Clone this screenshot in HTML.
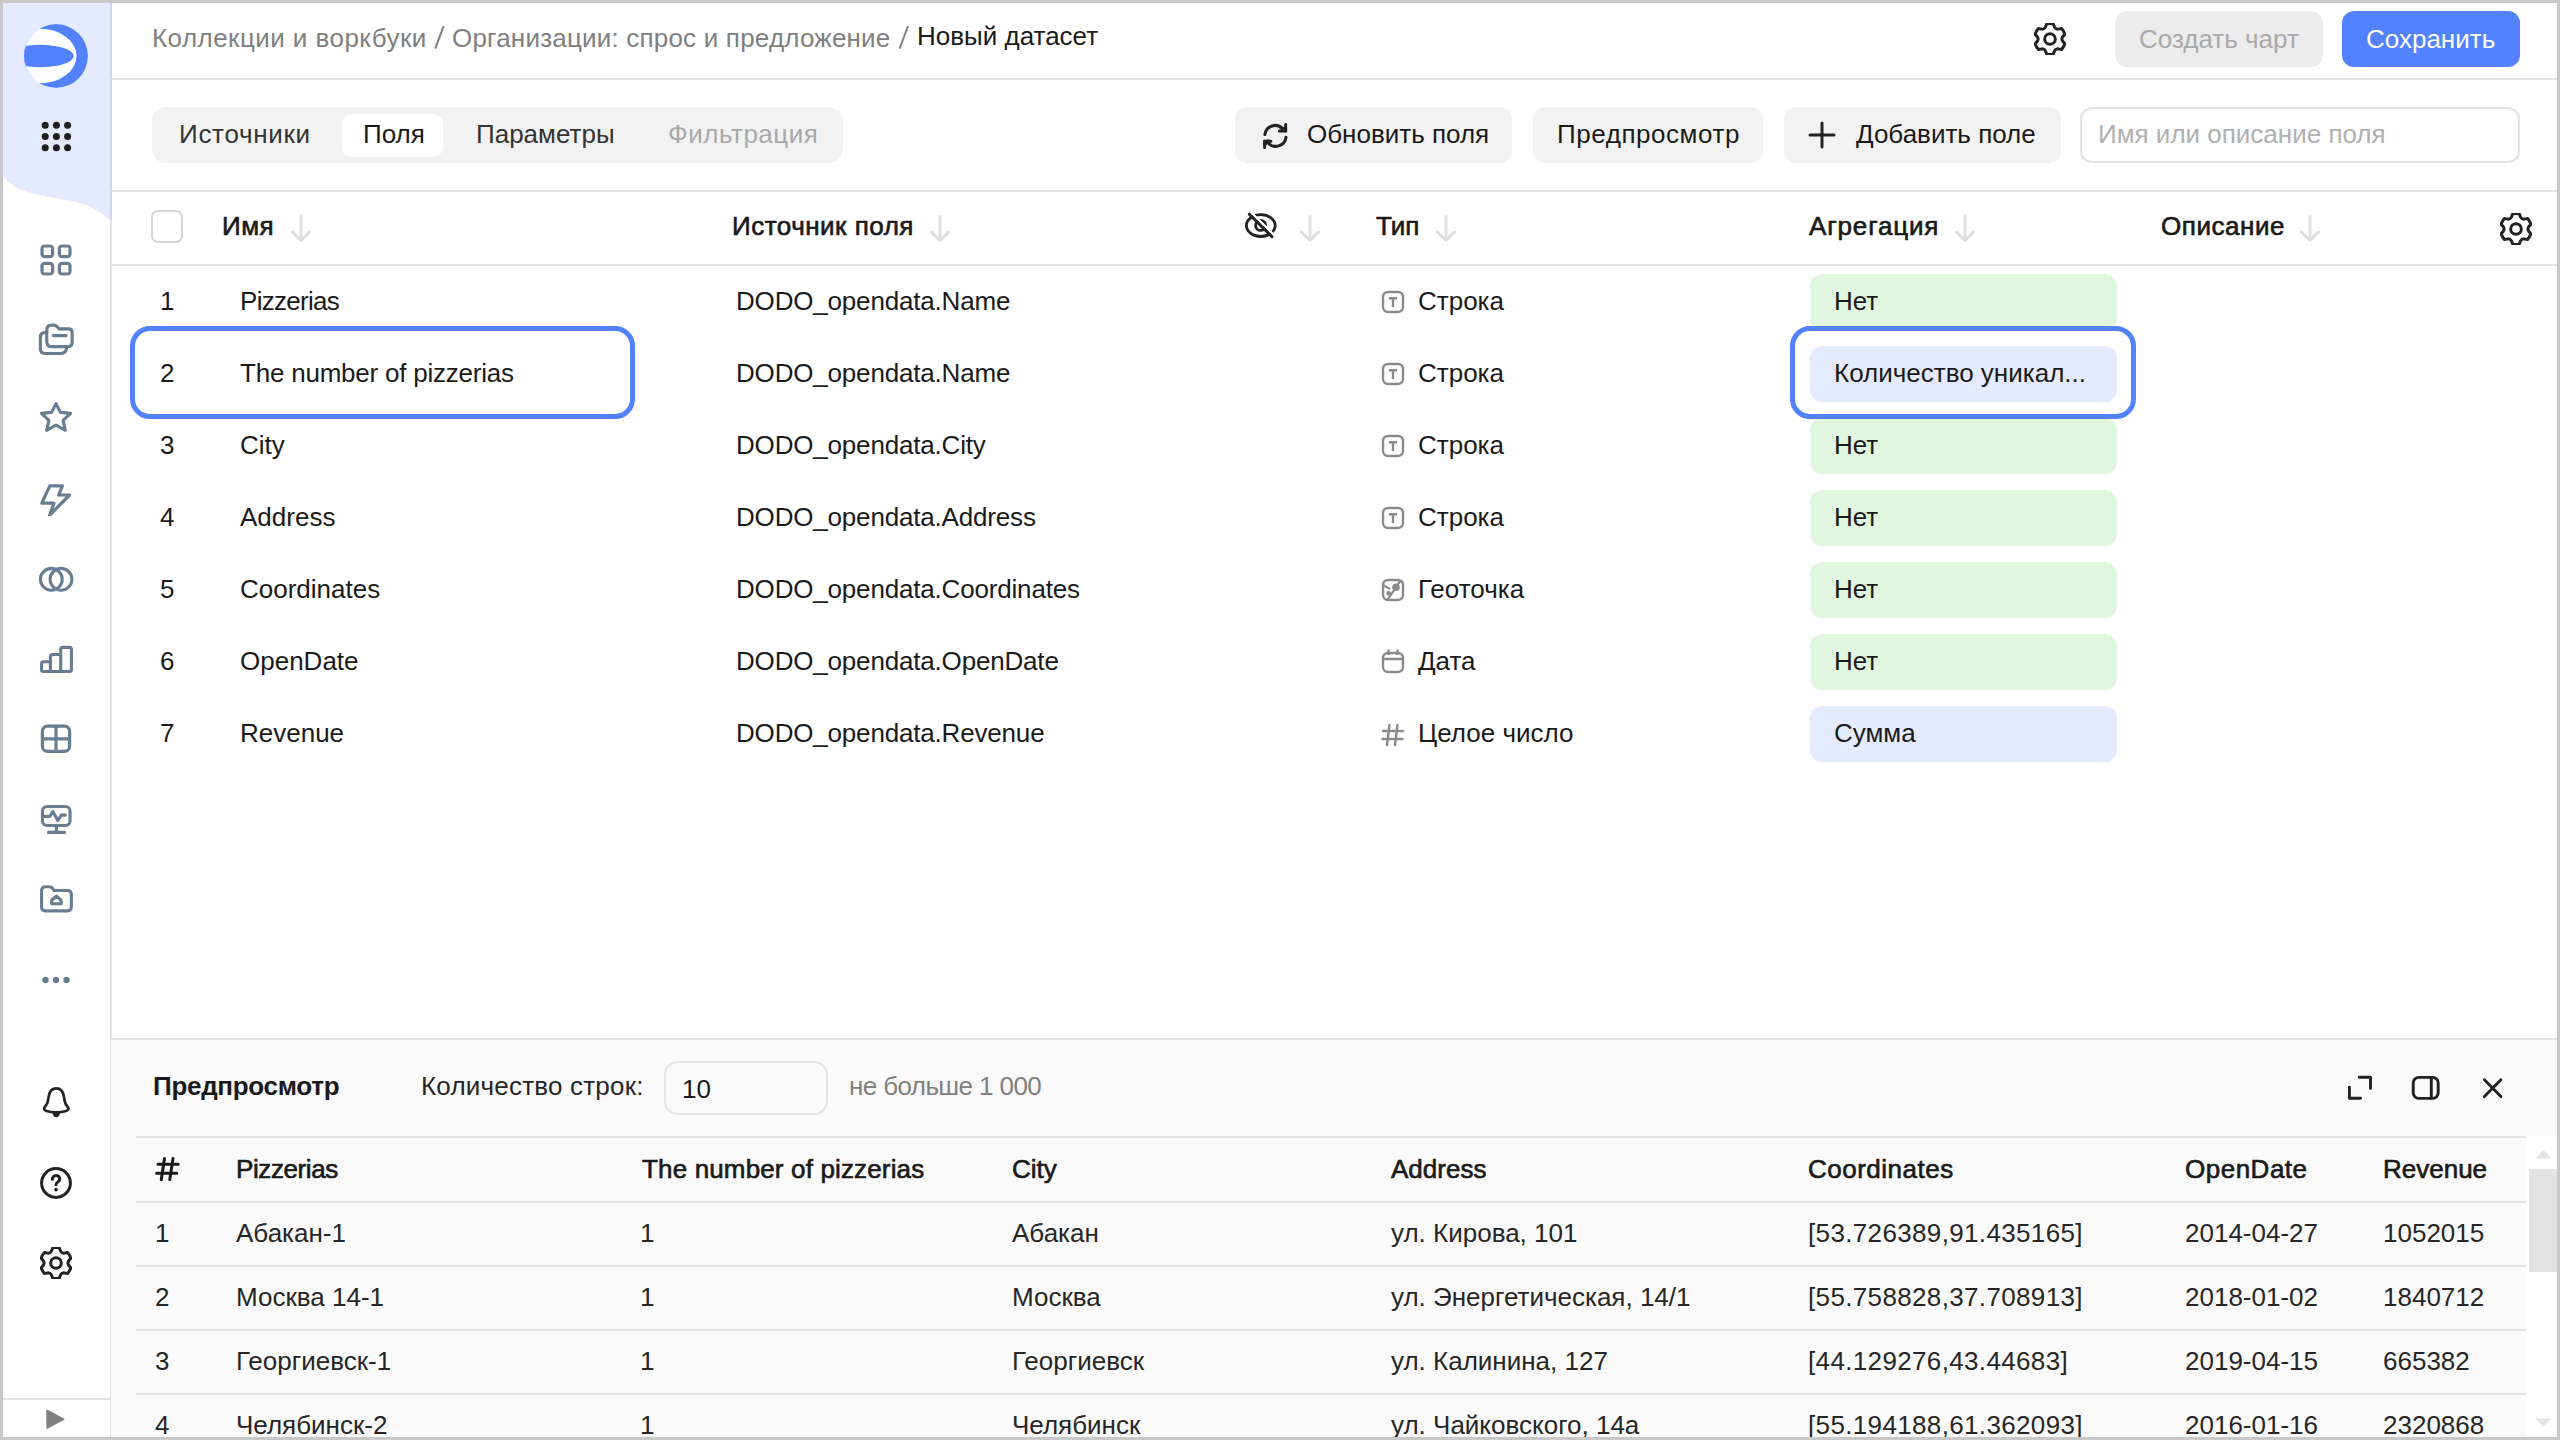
<!DOCTYPE html>
<html><head><meta charset="utf-8"><title>DataLens dataset</title>
<style>
html,body{margin:0;padding:0;}
body{width:2560px;height:1440px;position:relative;overflow:hidden;background:#fff;font-family:"Liberation Sans", sans-serif;}
.t{position:absolute;white-space:nowrap;font-family:"Liberation Sans", sans-serif;}
svg{display:block}
</style></head><body>
<svg style="position:absolute;left:3px;top:3px;" width="108" height="230" viewBox="0 0 108 230" fill="none"><path d="M0 0 H108 V218 C100 211 92 205 80 201 C62 196 45 194 28 190 C15 186 5 181 0 172 Z" fill="#e4eaff"/></svg><div style="position:absolute;left:110px;top:3px;width:2px;height:1434px;background:#e3e3e3"></div><div style="position:absolute;left:110px;top:3px;width:2px;height:216px;background:#cfd6ee"></div><svg style="position:absolute;left:24px;top:24px;" width="64" height="64" viewBox="0 0 64 64" fill="none"><defs><clipPath id="lc"><circle cx="32" cy="32" r="32"/></clipPath><linearGradient id="lg" x1="0" x2="1" y1="0" y2="0"><stop offset="0" stop-color="#dfe6ff"/><stop offset="0.45" stop-color="#ffffff"/></linearGradient></defs><g clip-path="url(#lc)"><circle cx="32" cy="32" r="32" fill="#5282ff"/><ellipse cx="16" cy="32" rx="36.5" ry="27.2" fill="url(#lg)"/><ellipse cx="16" cy="32" rx="33.8" ry="11.2" fill="#5282ff"/></g></svg><svg style="position:absolute;left:0px;top:0px;" width="112" height="160" viewBox="0 0 112 160" fill="none"><circle cx="45.2" cy="125.3" r="3.5" fill="#1f1f1f"/><circle cx="45.2" cy="136.5" r="3.5" fill="#1f1f1f"/><circle cx="45.2" cy="147.7" r="3.5" fill="#1f1f1f"/><circle cx="56.400000000000006" cy="125.3" r="3.5" fill="#1f1f1f"/><circle cx="56.400000000000006" cy="136.5" r="3.5" fill="#1f1f1f"/><circle cx="56.400000000000006" cy="147.7" r="3.5" fill="#1f1f1f"/><circle cx="67.6" cy="125.3" r="3.5" fill="#1f1f1f"/><circle cx="67.6" cy="136.5" r="3.5" fill="#1f1f1f"/><circle cx="67.6" cy="147.7" r="3.5" fill="#1f1f1f"/></svg><svg style="position:absolute;left:40px;top:244px;" width="32" height="32" viewBox="0 0 16 16" fill="none"><g stroke="#687d92" stroke-width="1.6" stroke-linecap="round" stroke-linejoin="round"><rect x="1" y="1" width="5.3" height="5.3" rx="1.3"/><rect x="9.7" y="1" width="5.3" height="5.3" rx="1.3"/><rect x="1" y="9.7" width="5.3" height="5.3" rx="1.3"/><rect x="9.7" y="9.7" width="5.3" height="5.3" rx="1.3"/></g></svg><svg style="position:absolute;left:32px;top:316px;" width="48" height="48" viewBox="0 0 48 48" fill="none"><g stroke="#687d92" stroke-width="3.1" fill="none" stroke-linecap="round" stroke-linejoin="round"><path d="M14.75 14.2 C14.75 11 16.6 9.1 19.6 9.1 H21.8 C23.8 9.1 24.7 9.8 26 11.4 L27.3 12.9 H36.4 C38.8 12.9 40.15 14.4 40.15 16.8 V26.6 C40.15 29.2 38.6 30.65 36 30.65 H19.8 C16.6 30.65 14.75 28.6 14.75 25.4 Z"/><path d="M21.3 19.6 H34"/><path d="M14.75 16.6 H12.8 C10 16.6 8.35 18.6 8.35 21.5 V32.8 C8.35 35.7 10 37.45 12.9 37.45 H28.8 C31.9 37.45 34.3 35.6 34.8 31.2"/></g></svg><svg style="position:absolute;left:36px;top:399px;" width="40" height="40" viewBox="0 0 40 40" fill="none"><path d="M20 4.6 L24.5 13.4 L34.6 14.4 L27.1 21.3 L29.3 31.3 L20 26.2 L10.7 31.3 L12.9 21.3 L5.4 14.4 L15.5 13.4 Z" stroke="#687d92" stroke-width="3.1" stroke-linejoin="round" fill="none"/></svg><svg style="position:absolute;left:40px;top:484px;" width="32" height="32" viewBox="0 0 16 16" fill="none"><g stroke="#687d92" stroke-width="1.6" stroke-linecap="round" stroke-linejoin="round"><path d="M4.9 0.9 H11.2 L9.3 5.5 H14.8 L4.8 15.6 L7 9.6 H0.9 Z"/></g></svg><svg style="position:absolute;left:36px;top:559px;" width="40" height="40" viewBox="0 0 40 40" fill="none"><g stroke="#687d92" stroke-width="3.1" fill="none"><circle cx="15.3" cy="20.3" r="10.9"/><circle cx="25" cy="20.3" r="10.9"/></g></svg><svg style="position:absolute;left:36px;top:640px;" width="40" height="40" viewBox="0 0 40 40" fill="none"><path d="M14.4 31.45 H7.5 C6.2 31.45 5.55 30.8 5.55 29.5 V23.7 C5.55 22.4 6.2 21.75 7.5 21.75 H14.4 V16.5 C14.4 15.2 15 14.55 16.3 14.55 H24.7 V9.3 C24.7 8 25.3 7.35 26.6 7.35 H33.5 C34.8 7.35 35.45 8 35.45 9.3 V29.5 C35.45 30.8 34.8 31.45 33.5 31.45 H14.4 M14.4 21.75 V31.45 M24.7 14.55 V31.45" stroke="#687d92" stroke-width="3.1" fill="none" stroke-linejoin="round"/></svg><svg style="position:absolute;left:40px;top:723px;" width="32" height="32" viewBox="0 0 16 16" fill="none"><g stroke="#687d92" stroke-width="1.6" stroke-linecap="round" stroke-linejoin="round"><rect x="1.2" y="1.6" width="13.6" height="12.6" rx="2.6"/><path d="M1.2 7.9 H14.8 M8 1.6 V14.2"/></g></svg><svg style="position:absolute;left:0px;top:780px;" width="112" height="150" viewBox="0 780 112 150" fill="none"><g stroke="#687d92" stroke-width="3.1" fill="none" stroke-linecap="round" stroke-linejoin="round"><rect x="42.45" y="806.45" width="27.6" height="19.1" rx="4.6"/><path d="M44 816.4 H49.8 L52.9 811.6 L57.8 820.4 L61.3 815.1 H65.3"/><path d="M56.4 825.5 V832.4 M48.5 832.4 H64.5"/><path d="M41.55 891 C41.55 888.3 43 886.8 45.6 886.8 H49.3 C50.9 886.8 51.7 887.3 52.7 888.5 L54.2 890.5 H67.3 C69.9 890.5 71.35 892 71.35 894.6 V906.8 C71.35 909.4 69.9 910.85 67.3 910.85 H45.6 C43 910.85 41.55 909.4 41.55 906.8 Z"/><path d="M51.7 903.8 V900.2 L56.45 896.2 L61.2 900.2 V903.8 Z"/></g></svg><svg style="position:absolute;left:40px;top:964px;" width="32" height="32" viewBox="0 0 32 32" fill="none"><circle cx="5.5" cy="16" r="3.2" fill="#687d92"/><circle cx="16" cy="16" r="3.2" fill="#687d92"/><circle cx="26.5" cy="16" r="3.2" fill="#687d92"/></svg><svg style="position:absolute;left:40px;top:1086px;" width="32" height="34" viewBox="0 0 32 34" fill="none"><path d="M16.3 2.4 C11.5 2.4 9.5 6 8.8 10 L7.8 15.5 C7.2 18.5 5.5 20 4.6 21.3 C3.6 22.8 4.2 24.3 6.5 25 C9 25.8 12.5 26.3 16.3 26.3 C20 26.3 23.5 25.8 26 25 C28.4 24.3 29 22.8 28 21.3 C27 20 25.3 18.5 24.8 15.5 L23.8 10 C23.1 6 21.1 2.4 16.3 2.4 Z" stroke="#222" stroke-width="2.7" stroke-linejoin="round" fill="none"/><path d="M12.4 26.2 L20.2 26.2 C19.8 29.6 18.5 31.2 16.3 31.2 C14.1 31.2 12.8 29.6 12.4 26.2 Z" fill="#222"/></svg><svg style="position:absolute;left:40px;top:1167px;" width="32" height="32" viewBox="0 0 16 16" fill="none"><g stroke="#222" stroke-width="1.5" stroke-linecap="round" stroke-linejoin="round" fill="none"><circle cx="8" cy="8" r="7.2"/><path d="M6.2 6.1 C6.2 5 7 4.2 8 4.2 C9.1 4.2 9.9 5 9.9 6 C9.9 7.2 8.1 7.6 8 8.8"/></g><circle cx="8" cy="11.3" r="0.95" fill="#222"/></svg><svg style="position:absolute;left:40px;top:1247px;" width="32" height="32" viewBox="1 1 30 30" fill="none"><g stroke="#222" stroke-width="2.81" stroke-linejoin="round" fill="none"><path d="M11.74 4.89 L12.96 1.72 A14.60 14.60 0 0 1 19.04 1.72 L20.26 4.89 Q21.30 6.82 23.49 6.75 L26.85 6.23 A14.60 14.60 0 0 1 29.89 11.49 L27.75 14.14 Q26.60 16.00 27.75 17.86 L29.89 20.51 A14.60 14.60 0 0 1 26.85 25.77 L23.49 25.25 Q21.30 25.18 20.26 27.11 L19.04 30.28 A14.60 14.60 0 0 1 12.96 30.28 L11.74 27.11 Q10.70 25.18 8.51 25.25 L5.15 25.77 A14.60 14.60 0 0 1 2.11 20.51 L4.25 17.86 Q5.40 16.00 4.25 14.14 L2.11 11.49 A14.60 14.60 0 0 1 5.15 6.23 L8.51 6.75 Q10.70 6.82 11.74 4.89 Z"/><circle cx="16" cy="16" r="5.0"/></g></svg><div style="position:absolute;left:3px;top:1398px;width:107px;height:2px;background:#e3e3e3"></div><svg style="position:absolute;left:44px;top:1408px;" width="22" height="22" viewBox="0 0 22 22" fill="none"><path d="M3.2 2.6 L19.6 11.2 L3.2 19.8 Z" fill="#808080" stroke="#808080" stroke-width="1.8" stroke-linejoin="round"/></svg><div style="position:absolute;left:111px;top:78px;width:2446px;height:2px;background:#e3e3e3"></div><div class="t" style="left:152px;top:23px;font-size:26px;line-height:30px;font-weight:400;color:#808080;letter-spacing:0.45px">Коллекции и воркбуки</div><svg style="position:absolute;left:430px;top:22px;" width="20" height="30" viewBox="0 0 20 30" fill="none"><path d="M5.2 26.6 L13.6 4.2" stroke="#808080" stroke-width="2"/></svg><div class="t" style="left:452px;top:23px;font-size:26px;line-height:30px;font-weight:400;color:#808080;letter-spacing:0.2px">Организации: спрос и предложение</div><svg style="position:absolute;left:894px;top:22px;" width="20" height="30" viewBox="0 0 20 30" fill="none"><path d="M5.6 26.6 L14 4.2" stroke="#808080" stroke-width="2"/></svg><div class="t" style="left:917px;top:21px;font-size:26px;line-height:30px;font-weight:400;color:#1a1a1a;">Новый датасет</div><svg style="position:absolute;left:2034px;top:23px;" width="32" height="32" viewBox="1 1 30 30" fill="none"><g stroke="#222" stroke-width="2.81" stroke-linejoin="round" fill="none"><path d="M11.74 4.89 L12.96 1.72 A14.60 14.60 0 0 1 19.04 1.72 L20.26 4.89 Q21.30 6.82 23.49 6.75 L26.85 6.23 A14.60 14.60 0 0 1 29.89 11.49 L27.75 14.14 Q26.60 16.00 27.75 17.86 L29.89 20.51 A14.60 14.60 0 0 1 26.85 25.77 L23.49 25.25 Q21.30 25.18 20.26 27.11 L19.04 30.28 A14.60 14.60 0 0 1 12.96 30.28 L11.74 27.11 Q10.70 25.18 8.51 25.25 L5.15 25.77 A14.60 14.60 0 0 1 2.11 20.51 L4.25 17.86 Q5.40 16.00 4.25 14.14 L2.11 11.49 A14.60 14.60 0 0 1 5.15 6.23 L8.51 6.75 Q10.70 6.82 11.74 4.89 Z"/><circle cx="16" cy="16" r="5.0"/></g></svg><div style="position:absolute;left:2115px;top:11px;width:208px;height:56px;background:#ececec;border-radius:12px"></div><div class="t" style="left:2139px;top:24px;font-size:26px;line-height:30px;font-weight:400;color:#a9a9a9;">Создать чарт</div><div style="position:absolute;left:2342px;top:11px;width:178px;height:56px;background:#5282ff;border-radius:12px"></div><div class="t" style="left:2366px;top:24px;font-size:26px;line-height:30px;font-weight:400;color:#ffffff;">Сохранить</div><div style="position:absolute;left:111px;top:190px;width:2446px;height:2px;background:#e3e3e3"></div><div style="position:absolute;left:152px;top:107px;width:691px;height:56px;background:#f2f2f2;border-radius:14px"></div><div style="position:absolute;left:342px;top:114px;width:101px;height:43px;background:#ffffff;border-radius:10px"></div><div class="t" style="left:179px;top:119px;font-size:26px;line-height:30px;font-weight:400;color:#333333;letter-spacing:0.7px">Источники</div><div class="t" style="left:363px;top:119px;font-size:26px;line-height:30px;font-weight:400;color:#1a1a1a;">Поля</div><div class="t" style="left:476px;top:119px;font-size:26px;line-height:30px;font-weight:400;color:#333333;">Параметры</div><div class="t" style="left:668px;top:119px;font-size:26px;line-height:30px;font-weight:400;color:#a9a9a9;letter-spacing:0.5px">Фильтрация</div><div style="position:absolute;left:1235px;top:107px;width:277px;height:56px;background:#f2f2f2;border-radius:12px"></div><svg style="position:absolute;left:1255px;top:115px;" width="40" height="40" viewBox="0 0 40 40" fill="none"><g stroke="#222" stroke-width="3" stroke-linecap="round" stroke-linejoin="round" fill="none"><path d="M9.9 19.6 A10.3 10.3 0 0 1 27.8 13.9 L30.6 16.1"/><path d="M30.7 9.4 V16.1 H24.4"/><path d="M27.1 15 L30.2 15.5 L30.5 12.5 Z" fill="#222"/><path d="M31 22.2 A10.3 10.3 0 0 1 12.8 27.5 L9.7 26.3"/><path d="M9.6 32.6 V26.3 H15.9"/><path d="M13.2 25.9 L10.2 26.6 L10.2 29.6 Z" fill="#222"/></g></svg><div class="t" style="left:1307px;top:119px;font-size:26px;line-height:30px;font-weight:400;color:#1a1a1a;">Обновить поля</div><div style="position:absolute;left:1533px;top:107px;width:230px;height:56px;background:#f2f2f2;border-radius:12px"></div><div class="t" style="left:1557px;top:119px;font-size:26px;line-height:30px;font-weight:400;color:#1a1a1a;letter-spacing:0.55px">Предпросмотр</div><div style="position:absolute;left:1784px;top:107px;width:277px;height:56px;background:#f2f2f2;border-radius:12px"></div><svg style="position:absolute;left:1808px;top:121px;" width="28" height="28" viewBox="0 0 28 28" fill="none"><path d="M14 2 V26 M2 14 H26" stroke="#222" stroke-width="3" stroke-linecap="round"/></svg><div class="t" style="left:1856px;top:119px;font-size:26px;line-height:30px;font-weight:400;color:#1a1a1a;">Добавить поле</div><div style="position:absolute;left:2080px;top:107px;width:440px;height:56px;box-sizing:border-box;border:2px solid #e3e3e3;border-radius:12px;background:#fff"></div><div class="t" style="left:2098px;top:119px;font-size:26px;line-height:30px;font-weight:400;color:#b0b0b0;">Имя или описание поля</div><div style="position:absolute;left:111px;top:264px;width:2446px;height:2px;background:#e3e3e3"></div><div style="position:absolute;left:151px;top:210px;width:32px;height:33px;box-sizing:border-box;border:2px solid #d6d6d6;border-radius:7px;background:#fff"></div><div class="t" style="left:222px;top:211px;font-size:26px;line-height:30px;font-weight:400;color:#1a1a1a;-webkit-text-stroke:0.65px #1a1a1a;letter-spacing:0.5px">Имя</div><svg style="position:absolute;left:290px;top:214px;" width="22" height="30" viewBox="0 0 22 30" fill="none"><path d="M11 2.5 V26.5 M2.5 18 L11 26.5 L19.5 18" stroke="#dedede" stroke-width="2.9" stroke-linecap="round" stroke-linejoin="round"/></svg><div class="t" style="left:732px;top:211px;font-size:26px;line-height:30px;font-weight:400;color:#1a1a1a;-webkit-text-stroke:0.65px #1a1a1a;letter-spacing:0.5px">Источник поля</div><svg style="position:absolute;left:929px;top:214px;" width="22" height="30" viewBox="0 0 22 30" fill="none"><path d="M11 2.5 V26.5 M2.5 18 L11 26.5 L19.5 18" stroke="#dedede" stroke-width="2.9" stroke-linecap="round" stroke-linejoin="round"/></svg><svg style="position:absolute;left:1240px;top:206px;" width="40" height="40" viewBox="0 0 40 40" fill="none"><g stroke="#222" stroke-width="2.8" fill="none" stroke-linecap="round"><ellipse cx="20.8" cy="19.6" rx="14.4" ry="10.9"/><circle cx="20.6" cy="19.4" r="5"/></g><path d="M11.15 6.35 L33.85 28.85" stroke="#fff" stroke-width="2.3"/><path d="M9.3 8.2 L32 30.7" stroke="#222" stroke-width="3" stroke-linecap="round"/></svg><svg style="position:absolute;left:1299px;top:214px;" width="22" height="30" viewBox="0 0 22 30" fill="none"><path d="M11 2.5 V26.5 M2.5 18 L11 26.5 L19.5 18" stroke="#dedede" stroke-width="2.9" stroke-linecap="round" stroke-linejoin="round"/></svg><div class="t" style="left:1376px;top:211px;font-size:26px;line-height:30px;font-weight:400;color:#1a1a1a;-webkit-text-stroke:0.65px #1a1a1a">Тип</div><svg style="position:absolute;left:1435px;top:214px;" width="22" height="30" viewBox="0 0 22 30" fill="none"><path d="M11 2.5 V26.5 M2.5 18 L11 26.5 L19.5 18" stroke="#dedede" stroke-width="2.9" stroke-linecap="round" stroke-linejoin="round"/></svg><div class="t" style="left:1809px;top:211px;font-size:26px;line-height:30px;font-weight:400;color:#1a1a1a;-webkit-text-stroke:0.65px #1a1a1a;letter-spacing:0.85px">Агрегация</div><svg style="position:absolute;left:1954px;top:214px;" width="22" height="30" viewBox="0 0 22 30" fill="none"><path d="M11 2.5 V26.5 M2.5 18 L11 26.5 L19.5 18" stroke="#dedede" stroke-width="2.9" stroke-linecap="round" stroke-linejoin="round"/></svg><div class="t" style="left:2161px;top:211px;font-size:26px;line-height:30px;font-weight:400;color:#1a1a1a;-webkit-text-stroke:0.65px #1a1a1a;letter-spacing:0.55px">Описание</div><svg style="position:absolute;left:2299px;top:214px;" width="22" height="30" viewBox="0 0 22 30" fill="none"><path d="M11 2.5 V26.5 M2.5 18 L11 26.5 L19.5 18" stroke="#dedede" stroke-width="2.9" stroke-linecap="round" stroke-linejoin="round"/></svg><svg style="position:absolute;left:2500px;top:213px;" width="32" height="32" viewBox="1 1 30 30" fill="none"><g stroke="#222" stroke-width="2.81" stroke-linejoin="round" fill="none"><path d="M11.74 4.89 L12.96 1.72 A14.60 14.60 0 0 1 19.04 1.72 L20.26 4.89 Q21.30 6.82 23.49 6.75 L26.85 6.23 A14.60 14.60 0 0 1 29.89 11.49 L27.75 14.14 Q26.60 16.00 27.75 17.86 L29.89 20.51 A14.60 14.60 0 0 1 26.85 25.77 L23.49 25.25 Q21.30 25.18 20.26 27.11 L19.04 30.28 A14.60 14.60 0 0 1 12.96 30.28 L11.74 27.11 Q10.70 25.18 8.51 25.25 L5.15 25.77 A14.60 14.60 0 0 1 2.11 20.51 L4.25 17.86 Q5.40 16.00 4.25 14.14 L2.11 11.49 A14.60 14.60 0 0 1 5.15 6.23 L8.51 6.75 Q10.70 6.82 11.74 4.89 Z"/><circle cx="16" cy="16" r="5.0"/></g></svg><div style="position:absolute;left:1810px;top:274px;width:307px;height:56px;background:#e1f6df;border-radius:12px"></div><div class="t" style="left:160px;top:286px;font-size:26px;line-height:30px;font-weight:400;color:#1a1a1a;">1</div><div class="t" style="left:240px;top:286px;font-size:26px;line-height:30px;font-weight:400;color:#1a1a1a;letter-spacing:-0.7px">Pizzerias</div><div class="t" style="left:736px;top:286px;font-size:26px;line-height:30px;font-weight:400;color:#1a1a1a;letter-spacing:-0.18px">DODO_opendata.Name</div><svg style="position:absolute;left:1381px;top:290px;" width="24" height="24" viewBox="0 0 24 24" fill="none"><rect x="2" y="2" width="20" height="20" rx="5" stroke="#8a8a8a" stroke-width="2.4"/><path d="M8 8.2 H16 M12 8.2 V17" stroke="#8a8a8a" stroke-width="2.4"/></svg><div class="t" style="left:1418px;top:286px;font-size:26px;line-height:30px;font-weight:400;color:#1a1a1a;">Строка</div><div class="t" style="left:1834px;top:286px;font-size:26px;line-height:30px;font-weight:400;color:#1a1a1a;">Нет</div><div style="position:absolute;left:1810px;top:346px;width:307px;height:56px;background:#e5ebff;border-radius:12px"></div><div class="t" style="left:160px;top:358px;font-size:26px;line-height:30px;font-weight:400;color:#1a1a1a;">2</div><div class="t" style="left:240px;top:358px;font-size:26px;line-height:30px;font-weight:400;color:#1a1a1a;letter-spacing:-0.22px">The number of pizzerias</div><div class="t" style="left:736px;top:358px;font-size:26px;line-height:30px;font-weight:400;color:#1a1a1a;letter-spacing:-0.18px">DODO_opendata.Name</div><svg style="position:absolute;left:1381px;top:362px;" width="24" height="24" viewBox="0 0 24 24" fill="none"><rect x="2" y="2" width="20" height="20" rx="5" stroke="#8a8a8a" stroke-width="2.4"/><path d="M8 8.2 H16 M12 8.2 V17" stroke="#8a8a8a" stroke-width="2.4"/></svg><div class="t" style="left:1418px;top:358px;font-size:26px;line-height:30px;font-weight:400;color:#1a1a1a;">Строка</div><div class="t" style="left:1834px;top:358px;font-size:26px;line-height:30px;font-weight:400;color:#1a1a1a;">Количество уникал...</div><div style="position:absolute;left:1810px;top:418px;width:307px;height:56px;background:#e1f6df;border-radius:12px"></div><div class="t" style="left:160px;top:430px;font-size:26px;line-height:30px;font-weight:400;color:#1a1a1a;">3</div><div class="t" style="left:240px;top:430px;font-size:26px;line-height:30px;font-weight:400;color:#1a1a1a;letter-spacing:0">City</div><div class="t" style="left:736px;top:430px;font-size:26px;line-height:30px;font-weight:400;color:#1a1a1a;letter-spacing:-0.18px">DODO_opendata.City</div><svg style="position:absolute;left:1381px;top:434px;" width="24" height="24" viewBox="0 0 24 24" fill="none"><rect x="2" y="2" width="20" height="20" rx="5" stroke="#8a8a8a" stroke-width="2.4"/><path d="M8 8.2 H16 M12 8.2 V17" stroke="#8a8a8a" stroke-width="2.4"/></svg><div class="t" style="left:1418px;top:430px;font-size:26px;line-height:30px;font-weight:400;color:#1a1a1a;">Строка</div><div class="t" style="left:1834px;top:430px;font-size:26px;line-height:30px;font-weight:400;color:#1a1a1a;">Нет</div><div style="position:absolute;left:1810px;top:490px;width:307px;height:56px;background:#e1f6df;border-radius:12px"></div><div class="t" style="left:160px;top:502px;font-size:26px;line-height:30px;font-weight:400;color:#1a1a1a;">4</div><div class="t" style="left:240px;top:502px;font-size:26px;line-height:30px;font-weight:400;color:#1a1a1a;letter-spacing:0">Address</div><div class="t" style="left:736px;top:502px;font-size:26px;line-height:30px;font-weight:400;color:#1a1a1a;letter-spacing:-0.18px">DODO_opendata.Address</div><svg style="position:absolute;left:1381px;top:506px;" width="24" height="24" viewBox="0 0 24 24" fill="none"><rect x="2" y="2" width="20" height="20" rx="5" stroke="#8a8a8a" stroke-width="2.4"/><path d="M8 8.2 H16 M12 8.2 V17" stroke="#8a8a8a" stroke-width="2.4"/></svg><div class="t" style="left:1418px;top:502px;font-size:26px;line-height:30px;font-weight:400;color:#1a1a1a;">Строка</div><div class="t" style="left:1834px;top:502px;font-size:26px;line-height:30px;font-weight:400;color:#1a1a1a;">Нет</div><div style="position:absolute;left:1810px;top:562px;width:307px;height:56px;background:#e1f6df;border-radius:12px"></div><div class="t" style="left:160px;top:574px;font-size:26px;line-height:30px;font-weight:400;color:#1a1a1a;">5</div><div class="t" style="left:240px;top:574px;font-size:26px;line-height:30px;font-weight:400;color:#1a1a1a;letter-spacing:0">Coordinates</div><div class="t" style="left:736px;top:574px;font-size:26px;line-height:30px;font-weight:400;color:#1a1a1a;letter-spacing:-0.18px">DODO_opendata.Coordinates</div><svg style="position:absolute;left:1381px;top:578px;" width="24" height="24" viewBox="0 0 24 24" fill="none"><rect x="2" y="2" width="20" height="20" rx="5" stroke="#8a8a8a" stroke-width="2.4"/><path d="M1.5 6.8 L9 11 M15 9.3 L6.7 21.5 M15 9.3 L19.5 2.5" stroke="#8a8a8a" stroke-width="2.2"/><circle cx="15" cy="9.3" r="3.8" fill="#8a8a8a"/><circle cx="7.7" cy="15.4" r="2.3" fill="#8a8a8a"/></svg><div class="t" style="left:1418px;top:574px;font-size:26px;line-height:30px;font-weight:400;color:#1a1a1a;">Геоточка</div><div class="t" style="left:1834px;top:574px;font-size:26px;line-height:30px;font-weight:400;color:#1a1a1a;">Нет</div><div style="position:absolute;left:1810px;top:634px;width:307px;height:56px;background:#e1f6df;border-radius:12px"></div><div class="t" style="left:160px;top:646px;font-size:26px;line-height:30px;font-weight:400;color:#1a1a1a;">6</div><div class="t" style="left:240px;top:646px;font-size:26px;line-height:30px;font-weight:400;color:#1a1a1a;letter-spacing:0">OpenDate</div><div class="t" style="left:736px;top:646px;font-size:26px;line-height:30px;font-weight:400;color:#1a1a1a;letter-spacing:-0.18px">DODO_opendata.OpenDate</div><svg style="position:absolute;left:1381px;top:648px;" width="24" height="26" viewBox="0 0 24 26" fill="none"><rect x="2" y="5" width="20" height="19" rx="5" stroke="#8a8a8a" stroke-width="2.4"/><path d="M2 11 H22 M7.5 1.5 V7 M16.5 1.5 V7" stroke="#8a8a8a" stroke-width="2.4"/></svg><div class="t" style="left:1418px;top:646px;font-size:26px;line-height:30px;font-weight:400;color:#1a1a1a;">Дата</div><div class="t" style="left:1834px;top:646px;font-size:26px;line-height:30px;font-weight:400;color:#1a1a1a;">Нет</div><div style="position:absolute;left:1810px;top:706px;width:307px;height:56px;background:#e5ebff;border-radius:12px"></div><div class="t" style="left:160px;top:718px;font-size:26px;line-height:30px;font-weight:400;color:#1a1a1a;">7</div><div class="t" style="left:240px;top:718px;font-size:26px;line-height:30px;font-weight:400;color:#1a1a1a;letter-spacing:0">Revenue</div><div class="t" style="left:736px;top:718px;font-size:26px;line-height:30px;font-weight:400;color:#1a1a1a;letter-spacing:-0.18px">DODO_opendata.Revenue</div><svg style="position:absolute;left:1380px;top:722px;" width="26" height="26" viewBox="0 0 26 26" fill="none"><path d="M9.5 3 L7 23 M17.5 3 L15 23 M3 9 H23 M2.5 17 H22.5" stroke="#8a8a8a" stroke-width="2.4" stroke-linecap="round"/></svg><div class="t" style="left:1418px;top:718px;font-size:26px;line-height:30px;font-weight:400;color:#1a1a1a;">Целое число</div><div class="t" style="left:1834px;top:718px;font-size:26px;line-height:30px;font-weight:400;color:#1a1a1a;">Сумма</div><div style="position:absolute;left:130px;top:326px;width:505px;height:93px;box-sizing:border-box;border:5px solid #5282ff;border-radius:20px"></div><div style="position:absolute;left:1790px;top:326px;width:346px;height:93px;box-sizing:border-box;border:5px solid #5282ff;border-radius:20px"></div><div style="position:absolute;left:111px;top:1038px;width:2446px;height:399px;background:#fafafa"></div><div style="position:absolute;left:111px;top:1038px;width:2446px;height:2px;background:#e3e3e3"></div><div class="t" style="left:153px;top:1071px;font-size:26px;line-height:30px;font-weight:700;color:#1a1a1a;letter-spacing:-0.3px">Предпросмотр</div><div class="t" style="left:421px;top:1071px;font-size:26px;line-height:30px;font-weight:400;color:#262626;letter-spacing:0.2px">Количество строк:</div><div style="position:absolute;left:664px;top:1061px;width:164px;height:54px;box-sizing:border-box;border:2px solid #e6e6e6;border-radius:14px;background:#fafafa"></div><div class="t" style="left:682px;top:1074px;font-size:26px;line-height:30px;font-weight:400;color:#1a1a1a;">10</div><div class="t" style="left:849px;top:1071px;font-size:26px;line-height:30px;font-weight:400;color:#808080;letter-spacing:-0.6px">не больше 1 000</div><svg style="position:absolute;left:2336px;top:1066px;" width="180" height="44" viewBox="2336 1066 180 44" fill="none"><g stroke="#222" stroke-width="2.9" fill="none" stroke-linecap="round" stroke-linejoin="round"><path d="M2359.2 1077.3 H2370.5 V1088.5"/><path d="M2349.4 1087.1 V1098.3 H2360.6"/><rect x="2413.2" y="1077.4" width="25" height="21" rx="5.6"/><path d="M2431.3 1077.4 V1098.4"/><path d="M2484.4 1079.7 L2500.9 1096.6 M2500.9 1079.7 L2484.4 1096.6"/></g></svg><div style="position:absolute;left:136px;top:1136px;width:2390px;height:2px;background:#e3e3e3"></div><div style="position:absolute;left:136px;top:1201px;width:2390px;height:2px;background:#e3e3e3"></div><div style="position:absolute;left:136px;top:1265px;width:2390px;height:2px;background:#e3e3e3"></div><div style="position:absolute;left:136px;top:1329px;width:2390px;height:2px;background:#e3e3e3"></div><div style="position:absolute;left:136px;top:1393px;width:2390px;height:2px;background:#e3e3e3"></div><div style="position:absolute;left:2526px;top:1136px;width:31px;height:301px;background:#ffffff"></div><svg style="position:absolute;left:2535px;top:1149px;" width="17" height="10" viewBox="0 0 17 10" fill="none"><path d="M0.5 9.5 L8.5 1 L16.5 9.5 Z" fill="#e3e3e3"/></svg><div style="position:absolute;left:2529px;top:1169px;width:28px;height:103px;background:#e3e3e3"></div><svg style="position:absolute;left:2535px;top:1418px;" width="17" height="10" viewBox="0 0 17 10" fill="none"><path d="M0.5 0.5 L8.5 9 L16.5 0.5 Z" fill="#e3e3e3"/></svg><svg style="position:absolute;left:155px;top:1157px;" width="26" height="24" viewBox="0 0 26 24" fill="none"><path d="M9.5 1.5 L6.3 22.5 M18 1.5 L14.8 22.5 M3 7.3 H23.2 M1.6 16.3 H21.8" stroke="#1a1a1a" stroke-width="3" stroke-linecap="round"/></svg><div class="t" style="left:236px;top:1154px;font-size:26px;line-height:30px;font-weight:400;color:#1a1a1a;-webkit-text-stroke:0.65px #1a1a1a;letter-spacing:-0.4px">Pizzerias</div><div class="t" style="left:642px;top:1154px;font-size:26px;line-height:30px;font-weight:400;color:#1a1a1a;-webkit-text-stroke:0.65px #1a1a1a;letter-spacing:0.15px">The number of pizzerias</div><div class="t" style="left:1012px;top:1154px;font-size:26px;line-height:30px;font-weight:400;color:#1a1a1a;-webkit-text-stroke:0.65px #1a1a1a;letter-spacing:0">City</div><div class="t" style="left:1391px;top:1154px;font-size:26px;line-height:30px;font-weight:400;color:#1a1a1a;-webkit-text-stroke:0.65px #1a1a1a;letter-spacing:0">Address</div><div class="t" style="left:1808px;top:1154px;font-size:26px;line-height:30px;font-weight:400;color:#1a1a1a;-webkit-text-stroke:0.65px #1a1a1a;letter-spacing:0.5px">Coordinates</div><div class="t" style="left:2185px;top:1154px;font-size:26px;line-height:30px;font-weight:400;color:#1a1a1a;-webkit-text-stroke:0.65px #1a1a1a;letter-spacing:0.5px">OpenDate</div><div class="t" style="left:2383px;top:1154px;font-size:26px;line-height:30px;font-weight:400;color:#1a1a1a;-webkit-text-stroke:0.65px #1a1a1a;letter-spacing:0">Revenue</div><div class="t" style="left:155px;top:1218px;font-size:26px;line-height:30px;font-weight:400;color:#262626;">1</div><div class="t" style="left:236px;top:1218px;font-size:26px;line-height:30px;font-weight:400;color:#262626;">Абакан-1</div><div class="t" style="left:640px;top:1218px;font-size:26px;line-height:30px;font-weight:400;color:#262626;">1</div><div class="t" style="left:1012px;top:1218px;font-size:26px;line-height:30px;font-weight:400;color:#262626;">Абакан</div><div class="t" style="left:1391px;top:1218px;font-size:26px;line-height:30px;font-weight:400;color:#262626;">ул. Кирова, 101</div><div class="t" style="left:1808px;top:1218px;font-size:26px;line-height:30px;font-weight:400;color:#262626;letter-spacing:0.35px">[53.726389,91.435165]</div><div class="t" style="left:2185px;top:1218px;font-size:26px;line-height:30px;font-weight:400;color:#262626;">2014-04-27</div><div class="t" style="left:2383px;top:1218px;font-size:26px;line-height:30px;font-weight:400;color:#262626;">1052015</div><div class="t" style="left:155px;top:1282px;font-size:26px;line-height:30px;font-weight:400;color:#262626;">2</div><div class="t" style="left:236px;top:1282px;font-size:26px;line-height:30px;font-weight:400;color:#262626;">Москва 14-1</div><div class="t" style="left:640px;top:1282px;font-size:26px;line-height:30px;font-weight:400;color:#262626;">1</div><div class="t" style="left:1012px;top:1282px;font-size:26px;line-height:30px;font-weight:400;color:#262626;">Москва</div><div class="t" style="left:1391px;top:1282px;font-size:26px;line-height:30px;font-weight:400;color:#262626;">ул. Энергетическая, 14/1</div><div class="t" style="left:1808px;top:1282px;font-size:26px;line-height:30px;font-weight:400;color:#262626;letter-spacing:0.35px">[55.758828,37.708913]</div><div class="t" style="left:2185px;top:1282px;font-size:26px;line-height:30px;font-weight:400;color:#262626;">2018-01-02</div><div class="t" style="left:2383px;top:1282px;font-size:26px;line-height:30px;font-weight:400;color:#262626;">1840712</div><div class="t" style="left:155px;top:1346px;font-size:26px;line-height:30px;font-weight:400;color:#262626;">3</div><div class="t" style="left:236px;top:1346px;font-size:26px;line-height:30px;font-weight:400;color:#262626;">Георгиевск-1</div><div class="t" style="left:640px;top:1346px;font-size:26px;line-height:30px;font-weight:400;color:#262626;">1</div><div class="t" style="left:1012px;top:1346px;font-size:26px;line-height:30px;font-weight:400;color:#262626;">Георгиевск</div><div class="t" style="left:1391px;top:1346px;font-size:26px;line-height:30px;font-weight:400;color:#262626;">ул. Калинина, 127</div><div class="t" style="left:1808px;top:1346px;font-size:26px;line-height:30px;font-weight:400;color:#262626;letter-spacing:0.35px">[44.129276,43.44683]</div><div class="t" style="left:2185px;top:1346px;font-size:26px;line-height:30px;font-weight:400;color:#262626;">2019-04-15</div><div class="t" style="left:2383px;top:1346px;font-size:26px;line-height:30px;font-weight:400;color:#262626;">665382</div><div class="t" style="left:155px;top:1410px;font-size:26px;line-height:30px;font-weight:400;color:#262626;">4</div><div class="t" style="left:236px;top:1410px;font-size:26px;line-height:30px;font-weight:400;color:#262626;">Челябинск-2</div><div class="t" style="left:640px;top:1410px;font-size:26px;line-height:30px;font-weight:400;color:#262626;">1</div><div class="t" style="left:1012px;top:1410px;font-size:26px;line-height:30px;font-weight:400;color:#262626;">Челябинск</div><div class="t" style="left:1391px;top:1410px;font-size:26px;line-height:30px;font-weight:400;color:#262626;">ул. Чайковского, 14а</div><div class="t" style="left:1808px;top:1410px;font-size:26px;line-height:30px;font-weight:400;color:#262626;letter-spacing:0.35px">[55.194188,61.362093]</div><div class="t" style="left:2185px;top:1410px;font-size:26px;line-height:30px;font-weight:400;color:#262626;">2016-01-16</div><div class="t" style="left:2383px;top:1410px;font-size:26px;line-height:30px;font-weight:400;color:#262626;">2320868</div><div style="position:absolute;left:0px;top:0px;width:2560px;height:3px;background:#c8c8c8"></div><div style="position:absolute;left:0px;top:1437px;width:2560px;height:3px;background:#c8c8c8"></div><div style="position:absolute;left:0px;top:0px;width:3px;height:1440px;background:#c8c8c8"></div><div style="position:absolute;left:2557px;top:0px;width:3px;height:1440px;background:#c8c8c8"></div>
</body></html>
